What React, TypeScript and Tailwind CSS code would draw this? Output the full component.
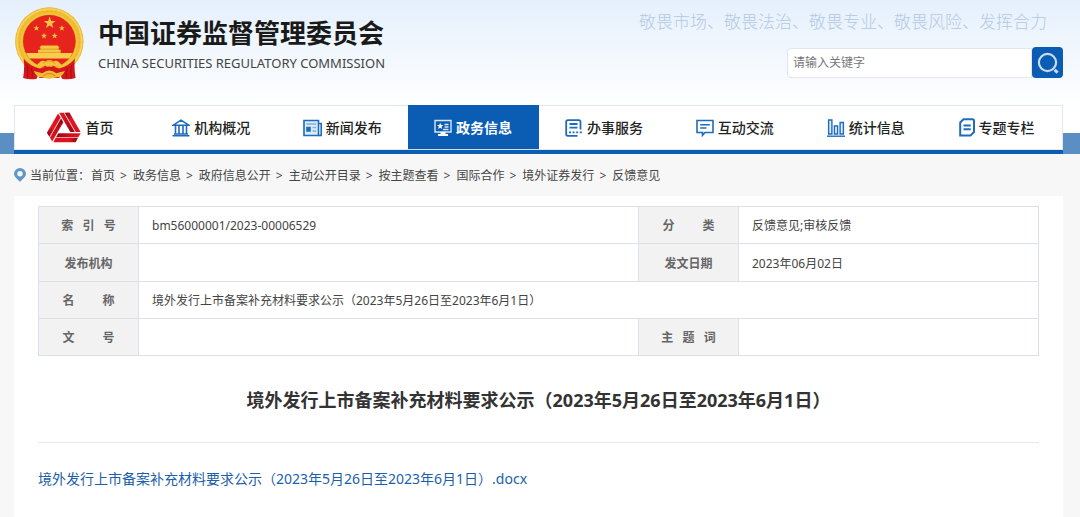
import type { ReactNode } from "react";

const line = {
  fill: "none",
  stroke: "#1f6cbd",
  strokeWidth: 1.6,
} as const;

function Emblem() {
  const star = "0,-10 2.4,-3.2 9.5,-3.1 3.8,1.2 5.9,8.1 0,4 -5.9,8.1 -3.8,1.2 -9.5,-3.1 -2.4,-3.2";
  return (
    <svg className="h-[73px] w-[70px] shrink-0" viewBox="40 20 210 220" aria-hidden="true">
      <defs>
        <radialGradient id="gold" cx="50%" cy="50%" r="50%">
          <stop offset="74%" stopColor="#c98a14" />
          <stop offset="80%" stopColor="#f6c63a" />
          <stop offset="88%" stopColor="#ecb732" />
          <stop offset="95%" stopColor="#fbd655" />
          <stop offset="100%" stopColor="#e0a82b" />
        </radialGradient>
      </defs>
      <circle cx="146" cy="124" r="103" fill="url(#gold)" />
      <circle cx="146" cy="124" r="93" fill="none" stroke="#d89b1d" strokeWidth="3" strokeDasharray="5 8" opacity=".35" />
      <circle cx="146" cy="123" r="79" fill="#e6231c" />
      <path d="M76 159 H216 A79 79 0 0 1 206 175 H86 A79 79 0 0 1 76 159Z" fill="#f7cd4c" />
      <path d="M112 158 V149 H119 V142 H116 L122 136 H171 L177 142 H174 V149 H180 V158Z" fill="#f5c63f" />
      <path d="M118 147 H175" stroke="#d58c18" strokeWidth="2" />
      <g fill="#f4c443">
        <polygon points={star} transform="translate(147 68) scale(1.9)" />
        <polygon points={star} transform="translate(107 84) scale(.95)" />
        <polygon points={star} transform="translate(184 84) scale(.95)" />
        <polygon points={star} transform="translate(130 107) scale(.95)" />
        <polygon points={star} transform="translate(162 107) scale(.95)" />
      </g>
      <path d="M69 176 Q86 198 118 206 L108 236 Q88 240 67 234 Q72 205 69 176Z" fill="#d5161a" />
      <path d="M223 176 Q206 198 174 206 L184 236 Q204 240 225 234 Q220 205 223 176Z" fill="#d5161a" />
      <path d="M78 194 Q84 212 80 232 M91 204 Q98 218 94 233 M214 194 Q208 212 212 232 M201 204 Q194 218 198 233" fill="none" stroke="#a80d12" strokeWidth="3" />
      <path d="M108 196 Q122 176 134 184 Q146 176 158 184 Q170 176 184 196 Q166 205 158 196 Q146 210 134 196 Q126 205 108 196Z" fill="#f5c23a" />
      <path d="M128 190 Q146 175 164 190" fill="none" stroke="#dd9e1c" strokeWidth="3" />
      <path d="M108 209 Q146 190 184 209 L176 234 H116Z" fill="#d5161a" />
      <path d="M99 213 L125 220 Q146 203 167 220 L193 213 Q184 232 168 232 Q146 240 124 232 Q107 232 99 213Z" fill="#f3bb34" />
      <path d="M128 228 Q146 212 164 228" fill="none" stroke="#c98516" strokeWidth="3" />
    </svg>
  );
}

function HomeIcon() {
  const arms = ["rotate(0)", "rotate(120)", "rotate(240)"];
  return (
    <svg className="h-[31px] w-[34px]" viewBox="-51 -51 102 92" aria-hidden="true">
      <defs>
        <linearGradient id="armOuter" x1="0" y1="0" x2="1" y2="0">
          <stop offset="0" stopColor="#d80f1d" />
          <stop offset="0.6" stopColor="#e41522" />
          <stop offset="1" stopColor="#8c0812" />
        </linearGradient>
        <linearGradient id="armInner" x1="0" y1="0" x2="1" y2="0">
          <stop offset="0" stopColor="#8c0812" />
          <stop offset="0.5" stopColor="#c90d1a" />
          <stop offset="1" stopColor="#e41522" />
        </linearGradient>
      </defs>
      {arms.map((turn) => (
        <g key={turn} transform={turn}>
          <polygon points="-32,39 35,39 42,26 -25,26" fill="url(#armOuter)" />
          <polygon points="-24,24 43,24 50,12 -17,12" fill="url(#armInner)" />
          <path d="M-25 25 H43" stroke="#f0a5aa" strokeWidth="1.5" />
        </g>
      ))}
    </svg>
  );
}

function BankIcon() {
  return (
    <svg className="h-[18px] w-[18px]" viewBox="0 0 18 18" {...line} aria-hidden="true">
      <path d="M1 6.3 L9 1.2 L17 6.3Z M3.5 7 V15 M7 7 V15 M11 7 V15 M14.5 7 V15 M2 15 H16 M.5 16.8 H17.5" />
    </svg>
  );
}

function NewsIcon() {
  return (
    <svg className="h-[18px] w-[19px]" viewBox="0 0 19 18" {...line} aria-hidden="true">
      <path d="M1 1.5 H15.5 V16.5 H1Z" fill="#dcebf9" />
      <path d="M15.5 4.5 H18.2 V16.5 H15.5" />
      <path d="M3.5 5 H13.2 M9.5 8.5 H13.2 M9.5 12 H13.2" stroke="#7fb0de" />
      <path d="M4 8.5 H7 V12 H4Z" fill="#1f6cbd" />
    </svg>
  );
}

function ScreenIcon() {
  return (
    <svg className="h-[18px] w-[18px]" viewBox="0 0 18 18" fill="none" stroke="#d9e8f7" strokeWidth="1.4" aria-hidden="true">
      <path d="M1 1.5 H17 V13 H1Z M10.5 5.5 H14.5 M10.5 8 H14.5 M9 10.5 H14.5" />
      <path d="M6.2 3.8 L7.1 6 L9.4 6.1 L7.6 7.6 L8.2 10 L6.2 8.7 L4.2 10 L4.8 7.6 L3 6.1 L5.3 6Z" fill="#fff" stroke="none" />
      <path d="M6.5 13 H11.5 V15 H14 V17 H4 V15 H6.5Z" fill="#fff" stroke="none" />
    </svg>
  );
}

function ServiceIcon() {
  return (
    <svg className="h-[18px] w-[18px]" viewBox="0 0 18 18" {...line} strokeWidth={1.8} aria-hidden="true">
      <path d="M15.5 10.5 V3 Q15.5 1.2 13.7 1.2 H3 Q1.2 1.2 1.2 3 V15 Q1.2 16.8 3 16.8 H12.5 M4.5 5 H12.5 M4.5 8.7 H12.5" />
      <path d="M4 13.3 H18" strokeDasharray="2 1.6" />
    </svg>
  );
}

function ChatIcon() {
  return (
    <svg className="h-[18px] w-[18px]" viewBox="0 0 18 18" {...line} aria-hidden="true">
      <path d="M1 1.5 H17 V13.5 H9 L6.5 16.3 V13.5 H1Z M4.2 5.7 H13.8 M4.2 9 H10.5" />
    </svg>
  );
}

function ChartIcon() {
  return (
    <svg className="h-[18px] w-[18px]" viewBox="0 0 18 18" {...line} strokeWidth={1.4} aria-hidden="true">
      <path d="M1.6 1 H4.9 V15 H1.6Z M7.4 7 H10.6 V15 H7.4Z M13.1 3.5 H16.4 V15 H13.1Z" fill="#dcebf9" />
      <path d="M0 17.2 H18" />
    </svg>
  );
}

function ColumnIcon() {
  return (
    <svg className="h-[19px] w-4" viewBox="0 0 16 19" {...line} strokeWidth={2} aria-hidden="true">
      <path d="M4.5 1.2 H13.5 Q15 1.2 15 2.7 V14 L11.5 17.6 H1.2 V4.5Z M4.5 7.5 H11.7 M4.5 11.3 H11.7" />
    </svg>
  );
}

function PinIcon() {
  return (
    <svg className="h-3.5 w-3" viewBox="0 0 12 14" aria-hidden="true">
      <path d="M6 14 C4.5 11.5 0 9.5 0 5.8 A6 5.8 0 0 1 12 5.8 C12 9.5 7.5 11.5 6 14Z" fill="#5f97c8" />
      <circle cx="6" cy="5.8" r="2.7" fill="#f7f7f7" />
    </svg>
  );
}

const navItems: { label: string; icon: ReactNode; active?: boolean }[] = [
  { label: "首页", icon: <HomeIcon /> },
  { label: "机构概况", icon: <BankIcon /> },
  { label: "新闻发布", icon: <NewsIcon /> },
  { label: "政务信息", icon: <ScreenIcon />, active: true },
  { label: "办事服务", icon: <ServiceIcon /> },
  { label: "互动交流", icon: <ChatIcon /> },
  { label: "统计信息", icon: <ChartIcon /> },
  { label: "专题专栏", icon: <ColumnIcon /> },
];

const crumbs = ["首页", "政务信息", "政府信息公开", "主动公开目录", "按主题查看", "国际合作", "境外证券发行", "反馈意见"];

const three = "\u00a0\u00a0\u00a0";
const wide = three + three + three;

function Label({ children }: { children: ReactNode }) {
  return (
    <th scope="row" className="border border-[#dbe1ea] bg-[#f2f2f2] pt-0.5 text-center font-bold text-[#666]">
      {children}
    </th>
  );
}

function Value({ children, span }: { children?: ReactNode; span?: number }) {
  return (
    <td colSpan={span} className="border border-[#dbe1ea] px-[13px] pt-0.5 text-[#444]">
      {children}
    </td>
  );
}

export default function App() {
  return (
    <div className="min-h-screen bg-[#f7f7f7] font-['Noto_Sans','Noto_Sans_CJK_SC',sans-serif] text-xs text-[#444]">
      <div className="bg-linear-to-b from-[#e5f0fc] to-white to-70%">
        <header className="flex h-[105px] justify-between pr-[17px] pl-3.5">
          <a href="#" className="flex items-start gap-[14px] pt-[7px]">
            <Emblem />
            <span className="flex flex-col pt-2 text-[#1a1a1a]">
              <span className="text-[26px] leading-9 font-bold">中国证券监督管理委员会</span>
              <span className="text-[13px] leading-6 text-[#444]">CHINA SECURITIES REGULATORY COMMISSION</span>
            </span>
          </a>
          <div className="flex flex-col items-end pt-2.5">
            <p className="pr-4 text-[17px] leading-6 font-light text-[#b3c8e6]">
              敬畏市场、敬畏法治、敬畏专业、敬畏风险、发挥合力
            </p>
            <form className="mt-[13px] flex items-center" onSubmit={(e) => e.preventDefault()}>
              <input
                type="text"
                aria-label="请输入关键字"
                placeholder="请输入关键字"
                className="h-[30px] w-[245px] rounded-l border border-[#e2e6ea] bg-white px-[5px] text-xs placeholder:text-[#777]"
              />
              <button type="submit" aria-label="搜索" className="flex h-[31px] w-[31px] items-center justify-center rounded bg-[#0b5cb3]">
                <svg className="h-[22px] w-[22px]" viewBox="0 0 22 22" fill="none" stroke="#c9def3" aria-hidden="true">
                  <circle cx="10.5" cy="10.5" r="8.6" strokeWidth="2.2" />
                  <path d="M17.6 17.8 L20.6 20.6" strokeWidth="3" />
                </svg>
              </button>
            </form>
          </div>
        </header>
        <div className="bg-[linear-gradient(transparent_28px,#5b8ec3_28px)] pr-[17px] pl-3.5">
          <nav className="flex border-b-4 border-[#0b5cb3] bg-white">
            {navItems.map((item) => (
              <a
                key={item.label}
                href="#"
                className={
                  item.active
                    ? "flex h-[45px] flex-1 items-center justify-center gap-1 border-y border-t-[#0b5cb3] border-b-[#d5dde6] bg-[#0b5cb3] text-sm font-bold text-white"
                    : "flex h-[45px] flex-1 items-center justify-center gap-1 border-y border-[#e3e6ea] text-sm font-medium text-[#222] first:border-l last:border-r"
                }
              >
                {item.icon}
                {item.label}
              </a>
            ))}
          </nav>
        </div>
      </div>

      <nav aria-label="当前位置" className="flex h-[42px] items-center pl-3.5">
        <PinIcon />
        <span className="mr-px ml-1 pt-0.5 leading-5">当前位置：</span>
        {crumbs.map((crumb, i) => (
          <span key={crumb} className="pt-0.5 leading-5">
            {i > 0 && <span className="mr-1.5 ml-[5px]">&gt;</span>}
            <a href="#">{crumb}</a>
          </span>
        ))}
      </nav>

      <main className="mr-[17px] ml-3.5 min-h-[321px] bg-white px-6 pt-2.5 pb-7">
        <table className="w-full table-fixed border-collapse text-left leading-5">
          <colgroup>
            <col className="w-[10%]" />
            <col className="w-[50%]" />
            <col className="w-[10%]" />
            <col className="w-[30%]" />
          </colgroup>
          <tbody>
            <tr className="h-[37px]">
              <Label>{`索${three}引${three}号`}</Label>
              <Value>bm56000001/2023-00006529</Value>
              <Label>{`分${wide}类`}</Label>
              <Value>反馈意见;审核反馈</Value>
            </tr>
            <tr className="h-[38px]">
              <Label>发布机构</Label>
              <Value />
              <Label>发文日期</Label>
              <Value>2023年06月02日</Value>
            </tr>
            <tr className="h-[37px]">
              <Label>{`名${wide}称`}</Label>
              <Value span={3}>境外发行上市备案补充材料要求公示（2023年5月26日至2023年6月1日）</Value>
            </tr>
            <tr className="h-[37px]">
              <Label>{`文${wide}号`}</Label>
              <Value />
              <Label>{`主${three}题${three}词`}</Label>
              <Value />
            </tr>
          </tbody>
        </table>
        <h1 className="mt-[30px] border-b border-[#e5e8ec] pb-7 text-center text-lg leading-7 font-bold text-[#333]">
          境外发行上市备案补充材料要求公示（2023年5月26日至2023年6月1日）
        </h1>
        <p className="mt-6 text-sm leading-6">
          <a href="#" className="text-[#1c5fa8]">境外发行上市备案补充材料要求公示（2023年5月26日至2023年6月1日）.docx</a>
        </p>
      </main>
    </div>
  );
}
